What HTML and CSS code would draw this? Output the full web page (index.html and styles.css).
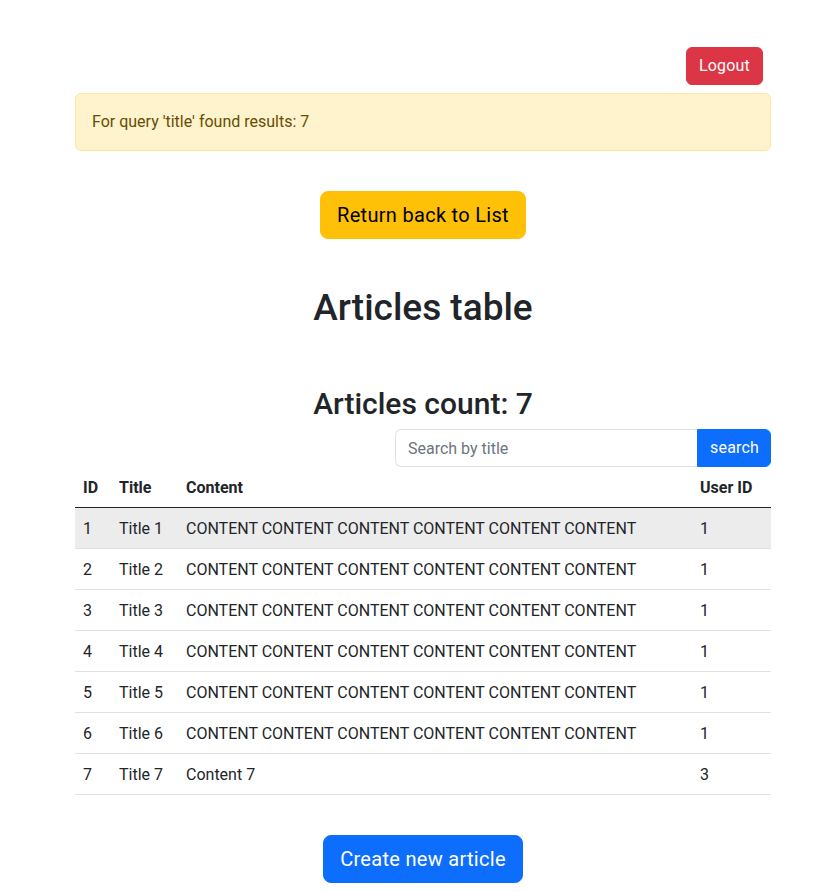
FILE: index.html
```html
<!DOCTYPE html>
<html lang="en">
<head>
<meta charset="utf-8">
<title>Articles</title>
<link rel="stylesheet" href="styles.css">
</head>
<body>
<div class="page">
  <div class="topbar">
    <button class="btn btn-danger" type="button">Logout</button>
  </div>
  <div class="alert">For query 'title' found results: 7</div>
  <div class="center return-wrap">
    <a class="btn btn-lg btn-warning" href="#">Return back to List</a>
  </div>
  <h1 class="title">Articles table</h1>
  <h2 class="count">Articles count: 7</h2>
  <form class="search">
    <div class="input-group">
      <input class="search-input" type="text" placeholder="Search by title">
      <button class="btn btn-primary search-btn" type="button">search</button>
    </div>
  </form>
  <table class="table">
    <colgroup>
      <col class="c-id"><col class="c-title"><col class="c-content"><col class="c-user">
    </colgroup>
    <thead>
      <tr><th>ID</th><th>Title</th><th>Content</th><th>User ID</th></tr>
    </thead>
    <tbody>
      <tr class="hover"><td>1</td><td>Title 1</td><td>CONTENT CONTENT CONTENT CONTENT CONTENT CONTENT</td><td>1</td></tr>
      <tr><td>2</td><td>Title 2</td><td>CONTENT CONTENT CONTENT CONTENT CONTENT CONTENT</td><td>1</td></tr>
      <tr><td>3</td><td>Title 3</td><td>CONTENT CONTENT CONTENT CONTENT CONTENT CONTENT</td><td>1</td></tr>
      <tr><td>4</td><td>Title 4</td><td>CONTENT CONTENT CONTENT CONTENT CONTENT CONTENT</td><td>1</td></tr>
      <tr><td>5</td><td>Title 5</td><td>CONTENT CONTENT CONTENT CONTENT CONTENT CONTENT</td><td>1</td></tr>
      <tr><td>6</td><td>Title 6</td><td>CONTENT CONTENT CONTENT CONTENT CONTENT CONTENT</td><td>1</td></tr>
      <tr><td>7</td><td>Title 7</td><td>Content 7</td><td>3</td></tr>
    </tbody>
  </table>
  <div class="center create-wrap">
    <a class="btn btn-lg btn-primary" href="#">Create new article</a>
  </div>
</div>
</body>
</html>
```

FILE: styles.css
```css
* { box-sizing: border-box; }
html, body { margin: 0; padding: 0; background: #fff; }
body {
  font-family: Roboto, "Liberation Sans", sans-serif;
  font-size: 16px;
  line-height: 24px;
  color: #212529;
}
.page {
  width: 696px;
  margin-left: 75px;
  padding-top: 47px;
}
.topbar {
  display: flex;
  justify-content: flex-end;
  padding-right: 8px;
  margin-bottom: 8px;
}
.btn {
  display: inline-block;
  font-family: inherit;
  font-size: 16px;
  line-height: 24px;
  padding: 6px 12px;
  border: 1px solid transparent;
  border-radius: 6px;
  text-decoration: none;
  cursor: pointer;
  text-align: center;
  letter-spacing: 0.2px;
}
.btn-lg {
  font-size: 20px;
  line-height: 30px;
  padding: 8px 16px;
  border-radius: 8px;
  letter-spacing: 0.3px;
}
.btn-danger { background: #dc3545; border-color: #dc3545; color: #fff; }
.btn-warning { background: #ffc107; border-color: #ffc107; color: #000; }
.btn-primary { background: #0d6efd; border-color: #0d6efd; color: #fff; }
.alert {
  padding: 16px;
  border: 1px solid #ffe69c;
  background: #fff3cd;
  color: #664d03;
  border-radius: 6px;
  margin-bottom: 40px;
}
.center { display: flex; justify-content: center; }
.return-wrap { margin-bottom: 48px; }
.title {
  margin: 0 0 58px;
  font-size: 37px;
  line-height: 42px;
  font-weight: 500;
  text-align: center;
}
.count {
  margin: 0 0 8px;
  font-size: 30px;
  line-height: 34px;
  font-weight: 500;
  text-align: center;
}
.search { display: flex; justify-content: flex-end; margin: 0; }
.input-group { display: flex; }
.search-input {
  width: 302px;
  height: 38px;
  font-family: inherit;
  font-size: 16px;
  line-height: 24px;
  padding: 6px 12px;
  border: 1px solid #dee2e6;
  border-right: 0;
  border-radius: 6px 0 0 6px;
  color: #212529;
  outline: none;
}
.search-input::placeholder { color: #6c757d; }
.search-btn {
  width: 74px;
  height: 38px;
  border-radius: 0 6px 6px 0;
}
.table {
  width: 696px;
  table-layout: fixed;
  border-collapse: collapse;
  margin: 0;
}
.c-id { width: 36px; }
.c-title { width: 67px; }
.c-content { width: 514px; }
.c-user { width: 79px; }
.table th, .table td {
  padding: 9px 8px 7px;
  text-align: left;
  vertical-align: top;
  white-space: nowrap;
}
.table th {
  font-weight: 700;
  border-bottom: 1px solid #212529;
}
.table td { border-bottom: 1px solid #dee2e6; }
.table tr.hover td { background: #ececec; }
.create-wrap { margin-top: 40px; }
```
